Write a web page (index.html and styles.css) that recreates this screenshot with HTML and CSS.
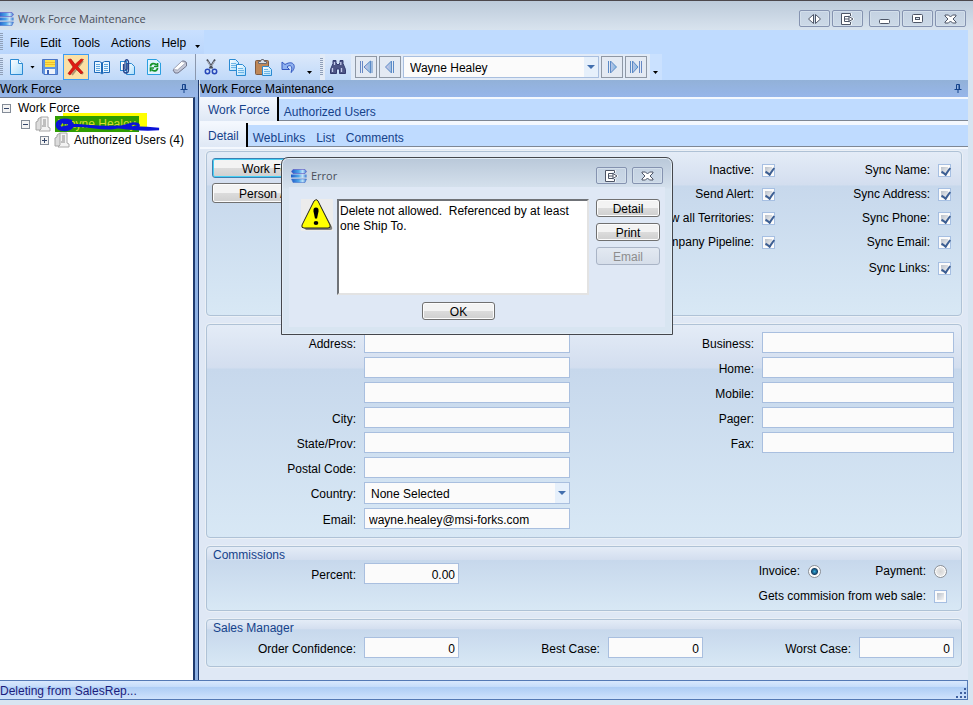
FILE: index.html
```html
<!DOCTYPE html>
<html lang="en">
<head>
    <meta charset="utf-8">
    <title>Work Force Maintenance</title>
    <link rel="stylesheet" href="styles.css">
</head>
<body>
    <svg class="defs" width="0" height="0" aria-hidden="true">
        <defs>
            <linearGradient id="blueBar" x1="0" x2="1">
                <stop offset="0" stop-color="#1d5cc8"/>
                <stop offset="0.5" stop-color="#4fa8ea"/>
                <stop offset="0.75" stop-color="#c3e4fa"/>
                <stop offset="1" stop-color="#2f74cf"/>
            </linearGradient>
            <linearGradient id="sheet" x1="0" x2="1" y1="0" y2="1">
                <stop offset="0" stop-color="#ffffff"/>
                <stop offset="1" stop-color="#a9dcfb"/>
            </linearGradient>
            <linearGradient id="nav" x1="0" x2="1">
                <stop offset="0" stop-color="#d5c8e6"/>
                <stop offset="1" stop-color="#7db9e2"/>
            </linearGradient>
        </defs>
        <symbol id="logo" viewBox="0 0 16 14">
            <path d="M2 0.500h12l1.500 2-1.500 2H2l-1.500-2z" fill="url(#blueBar)" stroke="#5a52c4" stroke-width="0.600"/>
            <path d="M0 5.500h15.500v3H0z" fill="url(#blueBar)"/>
            <path d="M0.500 10h15L14 13.500H2z" fill="url(#blueBar)" stroke="#4a76cf" stroke-width="0.600"/>
        </symbol>
        <symbol id="pin" viewBox="0 0 8 9">
            <path d="M2.5 0.5h3v5h-3zM5 1v5M0.5 5.5h7M4 6v3" fill="none" stroke="#15428b"/>
        </symbol>
        <symbol id="export" viewBox="0 0 13 12">
            <path d="M9.500 2.500V1h-8v10h8V9.500M7.500 3.500h-4v5h4M4.500 6h6M8.500 4l3 2-3 2" fill="none" stroke="#fff" stroke-width="2.500"/>
            <path d="M9.500 3V0.500h-9v11h9V9M8 3.500H3.500v5H8M3.500 6H8M8 3.500l4 2.500-4 2.500z" fill="none" stroke="#4d5566"/>
        </symbol>
        <symbol id="close" viewBox="0 0 13 10">
            <path d="M1 1h3.500l2 2 2-2H12v1L9 5l3 3v1H8.500l-2-2-2 2H1V8l3-3-3-3z" fill="#fff" stroke="#4d5566"/>
        </symbol>
        <symbol id="people" viewBox="0 0 16 16">
            <path d="M1 14V6l2-1V3l3-2 1 2v11z" fill="#dcdcdc" stroke="#a5a5a5"/>
            <path d="M6 1h7v10l2 1v3H4l2-2z" fill="#f3f3f3" stroke="#a8a8a8"/>
            <path d="M8 4h3M8 6h3M8 8h3M7 10h4" stroke="#8a8a8a"/>
        </symbol>
    </svg>

    <div class="window">
        <header class="titlebar">
            <svg class="logo" width="16" height="14"><use href="#logo"/></svg>
            <span class="caption">Work Force Maintenance</span>
            <div class="window-buttons">
                <button class="win-btn" aria-label="Resize"><svg width="13" height="10" viewBox="0 0 13 10"><path d="M5.500 0.500v9L0.500 5zM7.500 0.500v9l5-4.500z" fill="#fff" stroke="#4d5566"/></svg></button>
                <button class="win-btn" aria-label="Export"><svg width="13" height="12"><use href="#export"/></svg></button>
                <button class="win-btn spaced" aria-label="Minimize"><svg width="11" height="10" viewBox="0 0 11 10"><rect x="0.500" y="5.500" width="10" height="4" rx="1" fill="#fff" stroke="#4d5566"/></svg></button>
                <button class="win-btn" aria-label="Maximize"><svg width="11" height="10" viewBox="0 0 11 10"><rect x="0.500" y="0.500" width="10" height="8" rx="1" fill="#fff" stroke="#4d5566"/><rect x="3.500" y="3.500" width="4" height="2" fill="#dce6f0" stroke="#4d5566"/></svg></button>
                <button class="win-btn" aria-label="Close"><svg width="13" height="10"><use href="#close"/></svg></button>
            </div>
        </header>

        <div class="frame">
            <nav class="menubar">
                <div class="strip menu-strip">
                    <span class="grip"></span>
                    <button class="menu">File</button>
                    <button class="menu">Edit</button>
                    <button class="menu">Tools</button>
                    <button class="menu">Actions</button>
                    <button class="menu">Help</button>
                    <span class="caret low"></span>
                </div>
            </nav>

            <div class="toolbar">
                <div class="strip">
                    <span class="grip"></span>
                    <button class="tool" aria-label="New"><svg width="16" height="18" viewBox="0 0 16 18"><path d="M1.500 1.500h8l4 4v11h-12z" fill="url(#sheet)" stroke="#2b8ad2"/><path d="M9.500 1.500v4h4" fill="#fff" stroke="#2b8ad2"/></svg></button>
                    <span class="caret"></span>
                    <button class="tool" aria-label="Save"><svg width="16" height="16" viewBox="0 0 16 16"><path d="M0.500 0.500h15v15H2l-1.500-1.500z" fill="#5f94e0" stroke="#4a74c4"/><rect x="3" y="1" width="10" height="7" fill="#ffe24a"/><path d="M3 3.500h10M3 5.500h10" stroke="#f0bd2c"/><rect x="3" y="10" width="10" height="5" fill="#eef3fa"/><rect x="5" y="11" width="2" height="4" fill="#3b62b5"/></svg></button>
                    <button class="tool active" aria-label="Delete"><svg width="18" height="18" viewBox="0 0 18 18"><path d="M4 3l12 13M16 3L5 17" stroke="#8d7a5c" stroke-width="2" opacity=".7"/><path d="M1 1.500L4 1l4 5.500L14 1l2.500 0.500-6 7 5.500 6-2 1.500-5.500-5.500L3 17l-2-1.500 5-6.500z" fill="#df1a12" stroke="#a80f0c" stroke-width="0.600"/></svg></button>
                    <button class="tool" aria-label="Lookup"><svg width="18" height="16" viewBox="0 0 18 16"><path d="M1.500 2.500h5L9 4l2.500-1.500h5v11h-5.500L9 15l-2-1.500H1.500z" fill="#e8f5ff" stroke="#1c68b8"/><path d="M9 4v10" stroke="#1c68b8" stroke-width="2"/><path d="M3 5.500h4M3 7.500h4M3 9.500h4M3 11.500h4M11 5.500h4M11 7.500h4M11 9.500h4M11 11.500h4" stroke="#5fa5dd"/></svg></button>
                    <button class="tool" aria-label="Attach"><svg width="16" height="16" viewBox="0 0 16 16"><path d="M6.500 4.500h5l3 3v8h-8z" fill="url(#sheet)" stroke="#2b8ad2"/><rect x="0.500" y="2.500" width="6" height="9" fill="#fff" stroke="#2b8ad2"/><path d="M3.500 5v6c0 4 5 4 5 0V3c0-3-3.500-3-3.500 0v7c0 1.500 2 1.500 2 0V4" fill="none" stroke="#27458c" stroke-width="1.300"/></svg></button>
                    <button class="tool" aria-label="Refresh"><svg width="14" height="16" viewBox="0 0 14 16"><path d="M0.500 0.500h9l4 3.500v11.500h-13z" fill="#dff3ff" stroke="#2b9fe0"/><path d="M3.500 7.500c0-3 4-4 6-1.500M10.500 4v3.500H7M10.500 9c0 3-4 4-6 1.500M3.500 12.500V9H7" fill="none" stroke="#14932a" stroke-width="1.700"/></svg></button>
                    <button class="tool" aria-label="Clear"><svg width="16" height="16" viewBox="0 0 16 16"><path d="M1 11L9.500 2.500c1-1 4-.500 5 1V7L6 14H3z" fill="#c4c8d8" stroke="#73778c"/><path d="M1 10.500L9.500 2.500l4.500 1L5.500 11z" fill="#fff" stroke="#8d91a5" stroke-width="0.700"/></svg></button>
                    <span class="sep"></span>
                    <button class="tool" aria-label="Cut"><svg width="14" height="16" viewBox="0 0 14 16"><path d="M3 0.500l5.500 9M11 0.500l-5.500 9" stroke="#4a4f5c" stroke-width="1.800"/><path d="M3.500 2l3 5M10.500 2l-3 5" stroke="#d7dbe5" stroke-width="0.700"/><circle cx="3.500" cy="12.500" r="2.200" fill="none" stroke="#2747b8" stroke-width="1.500"/><circle cx="10.500" cy="12.500" r="2.200" fill="none" stroke="#2747b8" stroke-width="1.500"/></svg></button>
                    <button class="tool" aria-label="Copy"><svg width="17" height="17" viewBox="0 0 17 17"><path d="M0.500 0.500h6l3 3v8h-9z" fill="url(#sheet)" stroke="#2b8ad2"/><path d="M2 4.500h5M2 6.500h5M2 8.500h5" stroke="#6db5e6"/><path d="M7.500 5.500h6l3 3v8h-9z" fill="url(#sheet)" stroke="#2b8ad2"/><path d="M9 9.500h5M9 11.500h6M9 13.500h6" stroke="#6db5e6"/></svg></button>
                    <button class="tool" aria-label="Paste"><svg width="17" height="17" viewBox="0 0 17 17"><rect x="0.500" y="1.500" width="13" height="14" rx="1" fill="#bf8757" stroke="#7d5a42"/><path d="M3.500 4.500v-2h2l1-2h2l1 2h2v2z" fill="#d8dce4" stroke="#6a6a72"/><path d="M7.500 7.500h6l3 3v6h-9z" fill="url(#sheet)" stroke="#2b8ad2"/><path d="M9 10.500h4M9 12.500h6M9 14.500h6" stroke="#6db5e6"/></svg></button>
                    <button class="tool" aria-label="Undo"><svg width="16" height="14" viewBox="0 0 16 14"><path d="M1 2v7.500h7.500L6 7c3-3 6.500-1 4 5.500C16 8 13.500-1 4 4.500z" fill="#8fb2f0" stroke="#3558c0"/></svg></button>
                    <span class="caret low"></span>
                </div>
                <div class="strip nav-strip">
                    <span class="grip"></span>
                    <button class="tool find" aria-label="Find"><svg width="16" height="14" viewBox="0 0 16 14"><path d="M3 0.500h3v2l1 2h2l1-2v-2h3v3l2.500 6v4h-6V9h-3v4.500h-6v-4l2.500-6z" fill="#4d5586" stroke="#343c70"/><path d="M2.500 8v4M11.500 8v4M4.500 2v3M10.800 2v3" stroke="#c3cbec" stroke-width="1.300"/></svg></button>
                    <button class="nav-btn" aria-label="First"><svg width="14" height="14" viewBox="0 0 14 14"><path d="M1.500 1v12M3.500 1v12" stroke="#6788c5"/><path d="M11.500 1v12L5 7zM13 1v12" fill="url(#nav)" stroke="#5b8ac6"/></svg></button>
                    <button class="nav-btn" aria-label="Previous"><svg width="14" height="14" viewBox="0 0 14 14"><path d="M8.500 1v12L2.500 7zM10.500 1v12" fill="url(#nav)" stroke="#5b8ac6"/></svg></button>
                    <span class="select record-select">
                        <select aria-label="Record"><option>Wayne Healey</option></select>
                    </span>
                    <button class="nav-btn" aria-label="Next"><svg width="14" height="14" viewBox="0 0 14 14"><path d="M5.500 1v12l6-6zM3.500 1v12" fill="url(#nav)" stroke="#5b8ac6"/></svg></button>
                    <button class="nav-btn" aria-label="Last"><svg width="14" height="14" viewBox="0 0 14 14"><path d="M10.500 1v12M12.500 1v12" stroke="#6788c5"/><path d="M3.500 1v12L9 7zM1.500 1v12" fill="url(#nav)" stroke="#5b8ac6"/></svg></button>
                </div>
                <span class="overflow"><span class="caret low"></span></span>
            </div>

            <div class="workspace">
                <aside class="sidebar">
                    <h2 class="pane-title"><span>Work Force</span><svg width="8" height="9"><use href="#pin"/></svg></h2>
                    <ul class="tree">
                        <li class="node"><span class="toggle"></span><span>Work Force</span></li>
                        <li class="node level-1">
                            <span class="toggle"></span>
                            <svg width="16" height="16"><use href="#people"/></svg>
                            <span class="selected">Wayne Healey
                                <svg class="scribble" width="112" height="22" viewBox="0 0 112 22">
                                    <path d="M20 8C12 5 5 8 6 13s12 5 15 1-5-8-10-5-2 8 4 6 4-6-2-5M10 15c20-6 35 2 52 0s18-6 24-4-6 5-12 4 18-1 34 1c-12 1-28 0-42-2M20 12c15 0 30 4 60 1" fill="none" stroke="#0a12d8" stroke-width="2.500" stroke-linecap="round"/>
                                </svg>
                            </span>
                        </li>
                        <li class="node level-2"><span class="toggle plus"></span><svg width="16" height="16"><use href="#people"/></svg><span>Authorized Users (4)</span></li>
                    </ul>
                </aside>

                <main class="content">
                    <h1 class="pane-title"><span>Work Force Maintenance</span><svg width="8" height="9"><use href="#pin"/></svg></h1>
                    <div class="tabs">
                        <button class="tab current">Work Force</button>
                        <button class="tab">Authorized Users</button>
                    </div>
                    <div class="tabs">
                        <button class="tab current">Detail</button>
                        <button class="tab">WebLinks</button>
                        <button class="tab">List</button>
                        <button class="tab">Comments</button>
                    </div>

                    <form class="panel">
                        <section class="group general">
                            <div class="links">
                                <button type="button" class="btn focused">Work Force</button>
                                <button type="button" class="btn">Person / Org</button>
                            </div>
                            <div class="checks">
                                <label for="inactive">Inactive:</label><input class="check" type="checkbox" id="inactive" checked>
                                <label for="syncName">Sync Name:</label><input class="check" type="checkbox" id="syncName" checked>
                                <label for="sendAlert">Send Alert:</label><input class="check" type="checkbox" id="sendAlert" checked>
                                <label for="syncAddress">Sync Address:</label><input class="check" type="checkbox" id="syncAddress" checked>
                                <label for="territories">View all Territories:</label><input class="check" type="checkbox" id="territories" checked>
                                <label for="syncPhone">Sync Phone:</label><input class="check" type="checkbox" id="syncPhone" checked>
                                <label for="pipeline">Company Pipeline:</label><input class="check" type="checkbox" id="pipeline" checked>
                                <label for="syncEmail">Sync Email:</label><input class="check" type="checkbox" id="syncEmail" checked>
                                <label class="third" for="syncLinks">Sync Links:</label><input class="check" type="checkbox" id="syncLinks" checked>
                            </div>
                        </section>

                        <section class="group contact">
                            <div class="fields address">
                                <label for="address1">Address:</label><input class="text" id="address1">
                                <input class="text line" id="address2" aria-label="Address line 2">
                                <input class="text line" id="address3" aria-label="Address line 3">
                                <label for="city">City:</label><input class="text" id="city">
                                <label for="state">State/Prov:</label><input class="text" id="state">
                                <label for="postal">Postal Code:</label><input class="text" id="postal">
                                <label for="country">Country:</label>
                                <span class="select"><select id="country"><option>None Selected</option></select></span>
                                <label for="email">Email:</label><input class="text" id="email" value="wayne.healey@msi-forks.com">
                            </div>
                            <div class="fields phones">
                                <label for="business">Business:</label><input class="text" id="business">
                                <label for="home">Home:</label><input class="text" id="home">
                                <label for="mobile">Mobile:</label><input class="text" id="mobile">
                                <label for="pager">Pager:</label><input class="text" id="pager">
                                <label for="fax">Fax:</label><input class="text" id="fax">
                            </div>
                        </section>

                        <section class="group commissions">
                            <h3>Commissions</h3>
                            <div class="row">
                                <div class="number-field first">
                                    <label for="percent">Percent:</label><input class="text number" id="percent" value="0.00">
                                </div>
                                <div class="payout">
                                    <label for="invoice">Invoice:</label><input class="radio" type="radio" name="payout" id="invoice" checked>
                                    <label for="payment">Payment:</label><input class="radio" type="radio" name="payout" id="payment">
                                    <label class="web" for="webSale">Gets commision from web sale:</label><input class="check" type="checkbox" id="webSale">
                                </div>
                            </div>
                        </section>

                        <section class="group manager">
                            <h3>Sales Manager</h3>
                            <div class="row">
                                <div class="number-field first"><label for="confidence">Order Confidence:</label><input class="text number" id="confidence" value="0"></div>
                                <div class="number-field"><label for="best">Best Case:</label><input class="text number" id="best" value="0"></div>
                                <div class="number-field"><label for="worst">Worst Case:</label><input class="text number" id="worst" value="0"></div>
                            </div>
                        </section>
                    </form>
                </main>
            </div>

            <footer class="statusbar">
                <span>Deleting from SalesRep...</span>
                <svg width="12" height="12" viewBox="0 0 12 12"><path d="M9 1h2v2H9zM5 5h2v2H5zM9 5h2v2H9zM1 9h2v2H1zM5 9h2v2H5zM9 9h2v2H9z" fill="#3f5f9f"/></svg>
            </footer>
        </div>
    </div>

    <div class="dialog" role="dialog" aria-labelledby="dialogTitle">
        <div class="dialog-title">
            <svg width="16" height="14"><use href="#logo"/></svg>
            <span class="caption" id="dialogTitle">Error</span>
            <div class="window-buttons">
                <button class="win-btn" aria-label="Export"><svg width="13" height="12"><use href="#export"/></svg></button>
                <button class="win-btn" aria-label="Close"><svg width="13" height="10"><use href="#close"/></svg></button>
            </div>
        </div>
        <div class="dialog-body">
            <div class="message-row">
                <svg class="warning" width="32" height="32" viewBox="0 0 32 32">
                    <path d="M17 2l14 26q1 3-2 3H5l-2-2z" fill="#808080"/>
                    <path d="M14.500 1Q16 0 17 2l12 24q1 3-2 3H3q-3 0-2-3L13 2z" fill="#ff0" stroke="#222"/>
                    <path d="M15 8.500q3 0 2.500 4l-1.500 7h-2l-1.500-7q-.500-4 2.500-4z" fill="#000"/>
                    <ellipse cx="15" cy="24" rx="2.300" ry="2" fill="#000"/>
                </svg>
                <textarea class="message" aria-label="Message" readonly>Delete not allowed.  Referenced by at least one Ship To.</textarea>
                <div class="actions">
                    <button class="btn">Detail</button>
                    <button class="btn">Print</button>
                    <button class="btn" disabled>Email</button>
                </div>
            </div>
            <button class="btn ok">OK</button>
        </div>
    </div>
</body>
</html>
```

FILE: styles.css
```css
* {
    box-sizing: border-box;
}
body {
    margin: 0;
    font-family: "Liberation Sans", Arial, sans-serif;
    font-size: 12px;
    line-height: 16px;
    color: #000;
}
button, input, select, textarea {
    font: inherit;
    color: inherit;
    margin: 0;
}
h1, h2, h3 {
    margin: 0;
    font-size: 12px;
    font-weight: normal;
}
.defs {
    position: absolute;
}

/* window */
.window {
    display: flex;
    flex-direction: column;
    min-height: 100vh;
    padding: 0 5px 5px 0;
    background: #d8e5f1;
    border-top: 1px solid #4c474c;
}
.titlebar {
    display: flex;
    align-items: center;
    height: 29px;
    margin-right: -5px;
    padding: 6px 7px 0 0;
    background: linear-gradient(#bccada, #d8e3ee);
}
.logo {
    margin-left: -2px;
}
.caption {
    margin-left: 4px;
    font-family: "Open Sans", sans-serif;
    font-size: 11px;
    color: #4a4f5a;
}
.window-buttons {
    display: flex;
    gap: 2px;
    margin-left: auto;
}
.win-btn {
    display: flex;
    align-items: center;
    justify-content: center;
    width: 31px;
    height: 17px;
    padding: 0;
    border: 1px solid #8593b0;
    border-radius: 2px;
    background: linear-gradient(#c4d2e2, #ccd9e7);
    box-shadow: inset 0 0 0 1px #d3dfeb;
}
.win-btn.spaced {
    margin-left: 4px;
}
.frame {
    display: flex;
    flex-direction: column;
    flex: 1;
    background: #bfdbff;
}

/* menu and toolbars */
.strip {
    display: flex;
    align-items: center;
    height: 100%;
    background: linear-gradient(#dce9fb, #c0d9f9);
}
.menubar {
    height: 24px;
}
.menu-strip {
    gap: 1px;
    width: 204px;
    background: linear-gradient(#c9e0ff, #bad6fc);
}
.menu {
    padding: 2px 5px 0;
    border: 0;
    background: none;
}
.grip {
    width: 3px;
    height: 18px;
    margin-right: 1px;
    background: repeating-linear-gradient(#8f9fb8 0 1px, transparent 1px 2px);
}
.caret {
    width: 5px;
    height: 3px;
    background: #000;
    clip-path: polygon(0 0, 100% 0, 50% 100%);
}
.caret.low {
    align-self: flex-end;
    margin: 0 8px 6px 5px;
}
.menu-strip .caret.low {
    margin: 0 0 6px 3px;
}
.toolbar {
    display: flex;
    height: 26px;
}
.tool {
    display: flex;
    align-items: center;
    justify-content: center;
    width: 26px;
    height: 26px;
    padding: 0;
    border: 0;
    background: none;
}
.caret + .tool {
    margin-left: 2px;
}
.tool.active {
    border: 1px solid #3d9cf5;
    background: #fbe0a5;
}
.sep {
    width: 1px;
    height: 26px;
    margin: 0 2px;
    background: #8a97ad;
}
.nav-strip {
    gap: 2px;
    padding-right: 3px;
    background: #e2ebf7;
}
.nav-strip .grip {
    margin-right: 0;
}
.nav-strip .find {
    margin-right: 2px;
    background: linear-gradient(#dce9fb, #c0d9f9);
}
.nav-btn {
    display: flex;
    align-items: center;
    justify-content: center;
    width: 22px;
    height: 22px;
    padding: 0;
    border: 1px solid #8f98a5;
    background: #e4eaf3;
}
.overflow {
    display: flex;
    width: 12px;
    background: #cae1ff;
}
.overflow .caret.low {
    margin: 0 0 6px 3px;
}
.select {
    position: relative;
    display: block;
    height: 22px;
    border: 1px solid #a9bfdf;
    background: #fbfbfb;
}
.select select {
    width: 100%;
    height: 20px;
    padding: 1px 18px 0 6px;
    border: 0;
    background: none;
    appearance: none;
}
.select::before {
    content: "";
    position: absolute;
    inset: 0 0 0 auto;
    width: 14px;
    background: #e6f0fb;
}
.select::after {
    content: "";
    position: absolute;
    top: 8px;
    right: 3px;
    width: 8px;
    height: 4px;
    background: #426fae;
    clip-path: polygon(0 0, 100% 0, 50% 100%);
}
.record-select {
    width: 196px;
}

/* panes */
.workspace {
    display: flex;
    flex: 1;
}
.sidebar {
    display: flex;
    flex-direction: column;
    width: 199px;
    border-right: 1px solid #1e3a6e;
    background: #8db0e3;
}
.pane-title {
    display: flex;
    align-items: center;
    justify-content: space-between;
    height: 17px;
    padding-right: 6px;
    background: linear-gradient(#92b1d8, #97b6ea);
}
.sidebar .pane-title {
    padding-right: 10px;
}
.tree {
    flex: 1;
    margin: 0 3px 0 0;
    padding: 2px 0;
    list-style: none;
    border-top: 1px solid #6f7a8d;
    border-right: 2px solid #1e3a6e;
    background: #fff;
}
.node {
    display: flex;
    align-items: center;
    height: 16px;
    padding-left: 2px;
    white-space: nowrap;
}
.level-1 {
    padding-left: 21px;
}
.level-2 {
    padding-left: 40px;
}
.toggle {
    width: 9px;
    height: 9px;
    margin-right: 5px;
    border: 1px solid #848c98;
    background: linear-gradient(#34466b, #34466b) center / 5px 1px no-repeat, #f4f4f4;
}
.node > .toggle + span {
    margin-left: 2px;
}
.toggle.plus {
    background: linear-gradient(#34466b, #34466b) center / 5px 1px no-repeat, linear-gradient(#34466b, #34466b) center / 1px 5px no-repeat, #f4f4f4;
}
.node svg + span {
    margin-left: 4px;
}
.node .selected {
    position: relative;
    padding: 0 3px;
    background: #2f9c00;
    box-shadow: 8px -3px 0 0 #ff0;
    color: #d5dc2c;
}
.scribble {
    position: absolute;
    left: -4px;
    top: -3px;
}
.content {
    display: flex;
    flex-direction: column;
    flex: 1;
    padding-left: 1px;
    background: #dfe8f5;
}
.tabs {
    display: flex;
    align-items: flex-end;
    height: 26px;
    padding-bottom: 2px;
    border-top: 2px solid #f4f8fe;
    background: linear-gradient(#f4f8fe, #f4f8fe) bottom / 100% 2px no-repeat, linear-gradient(#7e8794, #7e8794) 0 calc(100% - 2px) / 100% 1px no-repeat, #bfdbff;
}
.tab {
    padding: 2px 6px 1px 5px;
    border: 0;
    background: none;
    color: #15428b;
}
.tab.current {
    height: 24px;
    padding: 2px 7px 0 8px;
    border-right: 2px solid #000;
    background: linear-gradient(#f4f8fe, #dfe8f5);
}

/* form */
.panel {
    display: flex;
    flex-direction: column;
    gap: 8px;
    padding: 2px 6px 13px;
}
.group {
    border: 1px solid #afc2d6;
    border-radius: 4px;
    box-shadow: 0 0 0 1px #ebf0f6;
    background: linear-gradient(#e4ecf7, #d3deef 20%, #c7d8ec 21%, #d8e8f5);
}
.group h3 {
    height: 16px;
    padding: 1px 0 0 6px;
    line-height: 15px;
    color: #15428b;
}
.general {
    display: flex;
    justify-content: space-between;
    height: 165px;
    padding: 6px 10px 0 5px;
}
.links {
    display: flex;
    flex-direction: column;
    gap: 5px;
    width: 122px;
}
.btn {
    height: 20px;
    padding: 1px 0 0;
    border: 1px solid #707070;
    border-radius: 3px;
    background: linear-gradient(#f3f3f3 50%, #dcdcdc 50%, #cfcfcf);
    box-shadow: inset 0 0 0 1px #fcfcfc;
    line-height: 14px;
}
.btn.focused {
    border-color: #3c7fb1;
    box-shadow: inset 0 0 0 1px #46d0f5;
}
.btn:disabled {
    border-color: #a9b4c6;
    background: linear-gradient(#e3e9f2, #d6deea);
    box-shadow: none;
    color: #8d8d8d;
}
.checks {
    display: grid;
    grid-template-columns: auto 13px 147px 13px;
    grid-template-rows: repeat(4, 24px) 28px;
    column-gap: 8px;
    align-items: center;
    justify-items: end;
}
.third {
    grid-column: 3;
}
.check {
    appearance: none;
    width: 13px;
    height: 13px;
    border: 1px solid #a6bfe2;
    background: linear-gradient(135deg, #b9c0ca, #f5f5f5) content-box, #fbfbfb;
    padding: 2px;
    position: relative;
}
.check:checked::after {
    content: "";
    position: absolute;
    left: 4px;
    top: 1px;
    width: 4px;
    height: 7px;
    border: solid #3d5f93;
    border-width: 0 2px 2px 0;
    transform: rotate(35deg);
}
.contact {
    display: flex;
    justify-content: space-between;
    height: 214px;
    padding: 7px 7px 0 0;
}
.fields {
    display: grid;
    grid-template-columns: 149px 206px;
    grid-auto-rows: min-content;
    gap: 4px 8px;
    align-items: center;
}
.fields.phones {
    grid-template-columns: auto 192px;
}
.fields label {
    justify-self: end;
    padding-top: 2px;
}
.text {
    width: 100%;
    height: 21px;
    padding: 2px 4px 0;
    border: 1px solid #a9bfdf;
    background: #fbfbfb;
}
.line {
    grid-column: 2;
}
.row {
    display: flex;
    justify-content: space-between;
    padding-right: 7px;
}
.number-field {
    display: flex;
    align-items: center;
    gap: 8px;
}
.number-field label {
    padding-top: 2px;
}
.number-field.first label {
    width: 149px;
    text-align: right;
}
.number {
    width: 95px;
    padding-right: 3px;
    text-align: right;
}
.commissions .row {
    align-items: flex-start;
    padding-right: 14px;
}
.commissions {
    height: 65px;
}
.payout {
    display: grid;
    grid-template-columns: auto 13px 97px 13px;
    grid-template-rows: 16px 34px;
    column-gap: 8px;
    align-items: center;
    justify-items: end;
}
.web {
    grid-column: 1 / 4;
}
.radio {
    appearance: none;
    width: 13px;
    height: 13px;
    border: 1px solid #8c9096;
    border-radius: 50%;
    background: radial-gradient(#d6d6d6, #f8f8f8);
    box-shadow: inset 0 0 0 1px #fff;
}
.radio:checked {
    background: radial-gradient(circle, #35b0de 0, #123f66 3px, #f4f4f4 4px);
}
.manager {
    height: 48px;
}
.manager .row {
    padding-top: 1px;
}

.statusbar {
    display: flex;
    align-items: flex-end;
    justify-content: space-between;
    height: 20px;
    border: 1px solid #5479b5;
    border-left: 0;
    background: linear-gradient(#d9e8fd, #c3dbfa 35%, #aecdf5 36%, #cfe2fc);
    color: #1c1c7c;
}
.statusbar span {
    align-self: center;
    padding-top: 2px;
}

/* error dialog */
.dialog {
    position: absolute;
    left: 281px;
    top: 157px;
    width: 392px;
    padding: 0 7px 7px;
    border: 1px solid #45474c;
    border-radius: 7px 7px 0 0;
    background: linear-gradient(#b9c8d9, #d5e1ed 30px, #d8e5f1 31px);
    box-shadow: inset 0 0 0 1px #e3edf6;
}
.dialog-title {
    display: flex;
    align-items: center;
    height: 29px;
    padding: 6px 2px 0;
}
.dialog-title .window-buttons {
    gap: 5px;
}
.dialog-body {
    height: 140px;
    padding: 12px 5px 0 12px;
    background: #dfe8f5;
}
.message-row {
    display: flex;
    align-items: flex-start;
}
.warning {
    background: #ececec;
}
.message {
    flex: 1;
    height: 96px;
    margin: 0 7px 0 4px;
    padding: 3px 1px;
    border: 2px solid;
    border-color: #6f7277 #e3e3e3 #e3e3e3 #6f7277;
    background: #fff;
    line-height: 15px;
    resize: none;
    outline: 0;
}
.actions {
    display: flex;
    flex-direction: column;
    gap: 6px;
    width: 64px;
}
.dialog .btn {
    height: 18px;
}
.btn.ok {
    display: block;
    width: 73px;
    margin: 7px 0 0 121px;
}
```
